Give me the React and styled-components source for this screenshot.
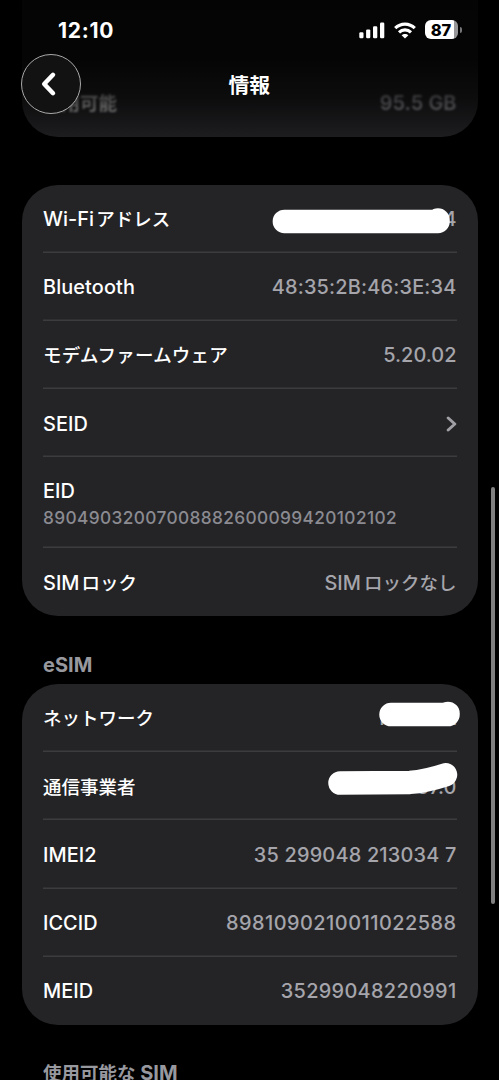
import React from "react";
import styled, { createGlobalStyle } from "styled-components";

const GlobalStyle = createGlobalStyle`
  * {
    box-sizing: border-box;
  }

  body {
    margin: 0;
    background: #000;
    font-family: Inter, "Noto Sans CJK JP", sans-serif;
    -webkit-font-smoothing: antialiased;
  }
`;

const Screen = styled.div`
  position: relative;
  width: 499px;
  height: 1080px;
  overflow: hidden;
  background: #000;
`;

const Content = styled.main`
  display: flex;
  flex-direction: column;
  padding: 0 21px 0 21.5px;
`;

const Card = styled.section`
  flex: none;
  padding: 0 21.5px;
  border-radius: 36px;
  background: #242427;
`;

const StorageCard = styled(Card)`
  height: 137px;
  margin-bottom: 47.5px;
  padding-top: 69px;
  border-radius: 0 0 36px 36px;
`;

const Row = styled.div`
  position: relative;
  display: flex;
  flex-direction: ${({ $stacked }) => ($stacked ? "column" : "row")};
  align-items: ${({ $stacked }) => ($stacked ? "flex-start" : "center")};
  justify-content: ${({ $stacked }) => ($stacked ? "center" : "space-between")};
  height: ${({ $stacked }) => ($stacked ? "91px" : "68.2px")};
  padding-top: ${({ $stacked }) => ($stacked ? "2px" : "0.8px")};
  box-shadow: ${({ $last }) => ($last ? "none" : "inset 0 -1.5px #3c3c3f")};
`;

const Label = styled.span`
  color: #fff;
  font-size: 19.9px;
  font-weight: 500;
  line-height: 28px;
  letter-spacing: ${({ $spacing }) => $spacing || "0.05px"};
  white-space: pre;
`;

const Value = styled(Label)`
  color: #a5a5ab;
`;

const Detail = styled.span`
  color: #8b8b91;
  font-size: 17.3px;
  font-weight: 500;
  line-height: 26px;
  letter-spacing: 0.37px;
`;

const Ja = styled.span`
  font-family: "Noto Sans CJK JP", sans-serif;
  font-size: 18.5px;
  line-height: 0;
  letter-spacing: ${({ $spacing }) => $spacing || "0"};
  margin-left: ${({ $gap }) => $gap || 0}px;
`;

const Blurred = styled(Label)`
  color: ${({ $color }) => $color};
  font-weight: 600;
  filter: blur(1.3px);
`;

const SectionTitle = styled.h2`
  height: 67.5px;
  margin: 0;
  padding: ${({ $top }) => $top || "35.5px"} 21.5px 0;
  color: #98989f;
  font-size: 20px;
  font-weight: 700;
  line-height: 26px;
  white-space: pre;
`;

const Scribble = styled.svg`
  position: absolute;
  right: -7.7px;
  top: 0;
  width: 200px;
  height: 68px;
`;

const Header = styled.header`
  position: absolute;
  inset: 0 0 auto;
  height: 137px;
  background: linear-gradient(
    rgba(0, 0, 0, 0.88) 0,
    rgba(0, 0, 0, 0.86) 60px,
    rgba(0, 0, 0, 0.66) 98px,
    rgba(0, 0, 0, 0.2) 137px
  );
`;

const StatusBar = styled.div`
  display: flex;
  align-items: center;
  justify-content: space-between;
  height: 54px;
  padding: 6px 41px 0 58px;
`;

const Time = styled.span`
  color: #fff;
  font-size: 21px;
  font-weight: 700;
  letter-spacing: 0.7px;
`;

const StatusIcons = styled.div`
  display: flex;
  align-items: center;
  gap: 9px;
`;

const Battery = styled.div`
  position: relative;
  display: flex;
  align-items: center;
  justify-content: center;
  width: 33px;
  height: 18.5px;
  margin-top: -1px;
  padding-right: 1px;
  border-radius: 6px;
  background: linear-gradient(90deg, #fff 88%, #97979a 88%);
  color: #000;
  font-size: 16.5px;
  font-weight: 800;

  &::after {
    content: "";
    position: absolute;
    right: -3.5px;
    width: 2px;
    height: 6px;
    border-radius: 0 2px 2px 0;
    background: #77777a;
  }
`;

const NavBar = styled.nav`
  display: grid;
  grid-template-columns: 60px 1fr 60px;
  align-items: center;
  height: 60px;
  padding: 0 21px 0 20.5px;
`;

const BackButton = styled.button`
  display: flex;
  align-items: center;
  justify-content: center;
  width: 60px;
  height: 60px;
  padding: 0 3px 0 0;
  border: 1px solid #a9a9a9;
  border-radius: 50%;
  background: #121212;
`;

const Title = styled.h1`
  margin: 0;
  color: #fff;
  font-family: "Noto Sans CJK JP", sans-serif;
  font-size: 20.8px;
  font-weight: 700;
  line-height: 30px;
  text-align: center;
`;

const ScrollThumb = styled.div`
  position: absolute;
  top: 487px;
  right: 4px;
  width: 4px;
  height: 417px;
  border-radius: 2px;
  background: #808080;
`;

const SignalIcon = () => (
  <svg width="26" height="17" viewBox="0 0 26 17" fill="#fff">
    <rect x="0.3" y="10.2" width="4.2" height="6" rx="1.2" />
    <rect x="7.1" y="7.4" width="4.2" height="8.8" rx="1.2" />
    <rect x="14" y="4.2" width="4.3" height="12" rx="1.2" />
    <rect x="21" y="0.6" width="4.3" height="15.6" rx="1.2" />
  </svg>
);

const WifiIcon = () => (
  <svg width="22" height="17" viewBox="0 0 22 17" fill="none" stroke="#fff" strokeWidth="3.1">
    <path d="M1.2 6.2C6.7 0.7 15.3 0.7 20.8 6.2" />
    <path d="M5 10.3C8.4 7 13.6 7 17 10.3" />
    <path d="M11 16.6L7.6 13.3C9.5 11.5 12.5 11.5 14.4 13.3Z" fill="#fff" stroke="none" />
  </svg>
);

const App = () => {
  return (
    <Screen>
      <GlobalStyle />
      <Content>
        <StorageCard>
          <Row $last>
            <Blurred $color="#d0d0d2">
              <Ja>使用可能</Ja>
            </Blurred>
            <Blurred $color="#a5a5ab">95.5 GB</Blurred>
          </Row>
        </StorageCard>

        <Card>
          <Row>
            <Label>
              Wi-Fi<Ja $gap={2}>アドレス</Ja>
            </Label>
            <Value>4</Value>
            <Scribble viewBox="0 0 200 68">
              <path
                d="M20.4 36.4H174V35"
                fill="none"
                stroke="#fff"
                strokeWidth="23.5"
                strokeLinecap="round"
                strokeLinejoin="round"
              />
            </Scribble>
          </Row>
          <Row>
            <Label $spacing="0.1px">Bluetooth</Label>
            <Value $spacing="0.2px">48:35:2B:46:3E:34</Value>
          </Row>
          <Row>
            <Label>
              <Ja $spacing="0.2px">モデムファームウェア</Ja>
            </Label>
            <Value>5.20.02</Value>
          </Row>
          <Row>
            <Label>SEID</Label>
            <svg width="11" height="16" viewBox="0 0 11 16" fill="none" stroke="#a0a0a5" strokeWidth="3">
              <path d="M2.2 2L8.8 8L2.2 14" strokeLinecap="round" strokeLinejoin="round" />
            </svg>
          </Row>
          <Row $stacked>
            <Label>EID</Label>
            <Detail>89049032007008882600099420102102</Detail>
          </Row>
          <Row $last>
            <Label>
              SIM<Ja $gap={2}>ロック</Ja>
            </Label>
            <Value>
              SIM<Ja $gap={3}>ロックなし</Ja>
            </Value>
          </Row>
        </Card>

        <SectionTitle>eSIM</SectionTitle>
        <Card>
          <Row>
            <Label>
              <Ja>ネットワーク</Ja>
            </Label>
            <Value $spacing="48px">N<Value>A</Value></Value>
            <Scribble viewBox="0 0 200 68">
              <path
                d="M127 30.6H184V29.4"
                fill="none"
                stroke="#fff"
                strokeWidth="23.5"
                strokeLinecap="round"
                strokeLinejoin="round"
              />
            </Scribble>
          </Row>
          <Row>
            <Label>
              <Ja>通信事業者</Ja>
            </Label>
            <Value>67.0</Value>
            <Scribble viewBox="0 0 200 68">
              <path
                d="M76 31L146 30.4Q162 29.2 181.5 22.8"
                fill="none"
                stroke="#fff"
                strokeWidth="23.5"
                strokeLinecap="round"
                strokeLinejoin="round"
              />
            </Scribble>
          </Row>
          <Row>
            <Label>IMEI2</Label>
            <Value $spacing="0.2px">35 299048 213034 7</Value>
          </Row>
          <Row>
            <Label>ICCID</Label>
            <Value $spacing="0.48px">8981090210011022588</Value>
          </Row>
          <Row $last>
            <Label>MEID</Label>
            <Value $spacing="0.33px">35299048220991</Value>
          </Row>
        </Card>

        <SectionTitle $top="35px">
          <Ja>使用可能な</Ja> SIM
        </SectionTitle>
      </Content>

      <Header>
        <StatusBar>
          <Time>12:10</Time>
          <StatusIcons>
            <SignalIcon />
            <WifiIcon />
            <Battery>87</Battery>
          </StatusIcons>
        </StatusBar>
        <NavBar>
          <BackButton aria-label="戻る">
            <svg width="16" height="26" viewBox="0 0 16 26" fill="none" stroke="#fff" strokeWidth="4.5">
              <path d="M12 3.8L3.2 13L12 22.2" strokeLinecap="round" strokeLinejoin="round" />
            </svg>
          </BackButton>
          <Title>情報</Title>
        </NavBar>
      </Header>
      <ScrollThumb />
    </Screen>
  );
};

export default App;
